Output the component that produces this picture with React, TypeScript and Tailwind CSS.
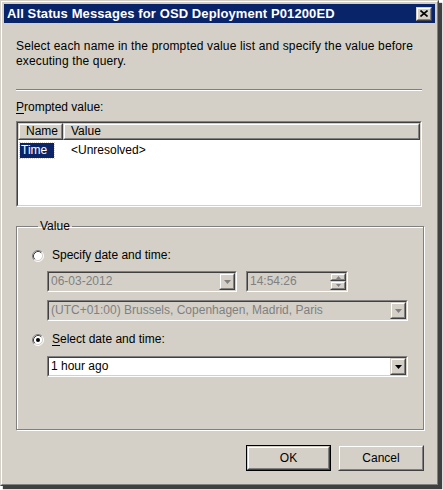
import React from "react";

function Radio({ checked }: { checked: boolean }) {
  return (
    <svg width="12" height="12" viewBox="0 0 12 12" className="shrink-0">
      <circle cx="6" cy="6" r="5" fill="white" />
      <path d="M2.11 9.89 A5.5 5.5 0 0 1 9.89 2.11" stroke="#808080" fill="none" />
      <path d="M2.82 9.18 A4.5 4.5 0 0 1 9.18 2.82" stroke="#404040" fill="none" />
      <path d="M9.89 2.11 A5.5 5.5 0 0 1 2.11 9.89" stroke="#ffffff" fill="none" />
      <path d="M9.18 2.82 A4.5 4.5 0 0 1 2.82 9.18" stroke="#d4d0c8" fill="none" />
      {checked && <circle cx="6" cy="6" r="2" fill="black" />}
    </svg>
  );
}

function Sunken({ className, inner, children }: { className?: string; inner?: string; children?: React.ReactNode }) {
  return (
    <div className={`border border-t-[#808080] border-l-[#808080] border-r-white border-b-white ${className ?? ""}`}>
      <div className={`h-full border border-t-[#404040] border-l-[#404040] border-r-[#d4d0c8] border-b-[#d4d0c8] ${inner ?? ""}`}>
        {children}
      </div>
    </div>
  );
}

function Raised({ className, inner, children }: { className?: string; inner?: string; children?: React.ReactNode }) {
  return (
    <div className={`bg-[#d4d0c8] border border-t-[#d4d0c8] border-l-[#d4d0c8] border-r-[#404040] border-b-[#404040] ${className ?? ""}`}>
      <div className={`h-full border border-t-white border-l-white border-r-[#808080] border-b-[#808080] ${inner ?? ""}`}>
        {children}
      </div>
    </div>
  );
}

function DropBtn({ disabled }: { disabled?: boolean }) {
  return (
    <Raised className="w-[16px] h-full shrink-0" inner="flex items-center justify-center">
      <svg width="7" height="4" viewBox="0 0 7 4">
        <path d="M0 0h7L3.5 4z" fill={disabled ? "#808080" : "#000"} />
      </svg>
    </Raised>
  );
}

function Combo({ text, disabled, width }: { text: string; disabled?: boolean; width: string }) {
  return (
    <Sunken
      className={`${width} h-[21px]`}
      inner={`flex items-stretch ${disabled ? "bg-[#d4d0c8] text-[#808080]" : "bg-white text-black"}`}
    >
      <div className="flex-1 flex items-center pl-[2px] leading-[15px]">{text}</div>
      <DropBtn disabled={disabled} />
    </Sunken>
  );
}

export default function App() {
  return (
    <div className="min-h-screen bg-white font-['Liberation_Sans',Arial,sans-serif] text-[12px] leading-[15px] text-black">
      <div className="w-[439px] h-[486px] shadow-[3px_3px_1px_rgba(0,0,0,0.75)] border border-t-[#d4d0c8] border-l-[#d4d0c8] border-r-[#404040] border-b-[#404040] bg-[#d4d0c8]">
        <div className="h-full flex flex-col border border-t-white border-l-white border-r-[#808080] border-b-[#808080] p-[2px]">
          {/* Title bar */}
          <div className="h-[19px] bg-[#0a246a] flex items-center justify-between pl-[3px] pr-[3px] shrink-0">
            <span className="text-white font-bold text-[13px] leading-[15px] tracking-[0.1px]">
              All Status Messages for OSD Deployment P01200ED
            </span>
            <Raised className="w-[16px] h-[14px]" inner="flex items-center justify-center">
              <svg width="8" height="7" viewBox="0 0 8 7">
                <path d="M0.5 0.5 L7.5 6.5 M7.5 0.5 L0.5 6.5" stroke="#000" strokeWidth="1.6" />
              </svg>
            </Raised>
          </div>

          {/* Content */}
          <div className="flex-1 flex flex-col pl-[12px] pr-[11px]">
            <p className="mt-[16px] whitespace-nowrap tracking-[0.15px]">
              Select each name in the prompted value list and specify the value before
              <br />
              executing the query.
            </p>

            <div className="mt-[20px] mr-[2px] h-[2px] border-t border-t-[#808080] border-b border-b-white" />

            <div className="mt-[9px]">
              <span className="underline underline-offset-2">P</span>rompted value:
            </div>

            <Sunken className="mt-[6px] mr-[2px] h-[86px]" inner="bg-white flex flex-col">
              <div className="flex h-[17px] shrink-0">
                <Raised className="w-[45px] h-full" inner="flex items-center pl-[6px]">
                  <span className="leading-[13px]">Name</span>
                </Raised>
                <Raised className="flex-1 h-full" inner="flex items-center pl-[6px]">
                  <span className="leading-[13px]">Value</span>
                </Raised>
              </div>
              <div className="flex items-center mt-[3px] h-[15px]">
                <span className="ml-[2px] w-[34px] bg-[#0a246a] text-white outline outline-1 outline-dotted outline-[#d4d0c8] pl-[1px]">
                  Time
                </span>
                <span className="ml-[17px]">&lt;Unresolved&gt;</span>
              </div>
            </Sunken>

            <fieldset className="mt-[12px] border border-[#808080] shadow-[inset_1px_1px_0_#fff,1px_1px_0_#fff] pl-[15px] pr-[14px] pb-[52px] min-w-0">
              <legend className="ml-[6px] px-[2px] leading-[15px]">Value</legend>

              <div className="mt-[14px] flex items-center h-[15px]">
                <Radio checked={false} />
                <span className="ml-[8px]">
                  Specify <span className="underline underline-offset-2">d</span>ate and time:
                </span>
              </div>

              <div className="mt-[8px] ml-[15px] flex gap-[9px]">
                <Combo text="06-03-2012" disabled width="w-[190px]" />
                <Sunken className="w-[102px] h-[21px]" inner="flex items-stretch bg-[#d4d0c8] text-[#808080]">
                  <div className="flex-1 flex items-center pl-[2px]">14:54:26</div>
                  <div className="w-[16px] flex flex-col shrink-0">
                    <Raised className="h-[8px]" inner="flex items-center justify-center">
                      <svg width="5" height="3" viewBox="0 0 5 3">
                        <path d="M2.5 0L5 3H0z" fill="#808080" />
                      </svg>
                    </Raised>
                    <Raised className="h-[9px]" inner="flex items-center justify-center">
                      <svg width="5" height="3" viewBox="0 0 5 3">
                        <path d="M0 0h5L2.5 3z" fill="#808080" />
                      </svg>
                    </Raised>
                  </div>
                </Sunken>
              </div>

              <div className="mt-[8px] ml-[15px]">
                <Combo text="(UTC+01:00) Brussels, Copenhagen, Madrid, Paris" disabled width="w-[361px]" />
              </div>

              <div className="mt-[11px] flex items-center h-[15px]">
                <Radio checked={true} />
                <span className="ml-[8px]">
                  <span className="underline underline-offset-2">S</span>elect date and time:
                </span>
              </div>

              <div className="mt-[9px] ml-[15px]">
                <Combo text="1 hour ago" width="w-[361px]" />
              </div>
            </fieldset>

            <div className="mt-[15px] flex justify-end gap-[7px]">
              <div className="border border-black">
                <Raised className="w-[83px] h-[24px]" inner="flex items-center justify-center">
                  OK
                </Raised>
              </div>
              <Raised className="w-[86px] h-[26px]" inner="flex items-center justify-center">
                Cancel
              </Raised>
            </div>
          </div>
        </div>
      </div>
    </div>
  );
}
